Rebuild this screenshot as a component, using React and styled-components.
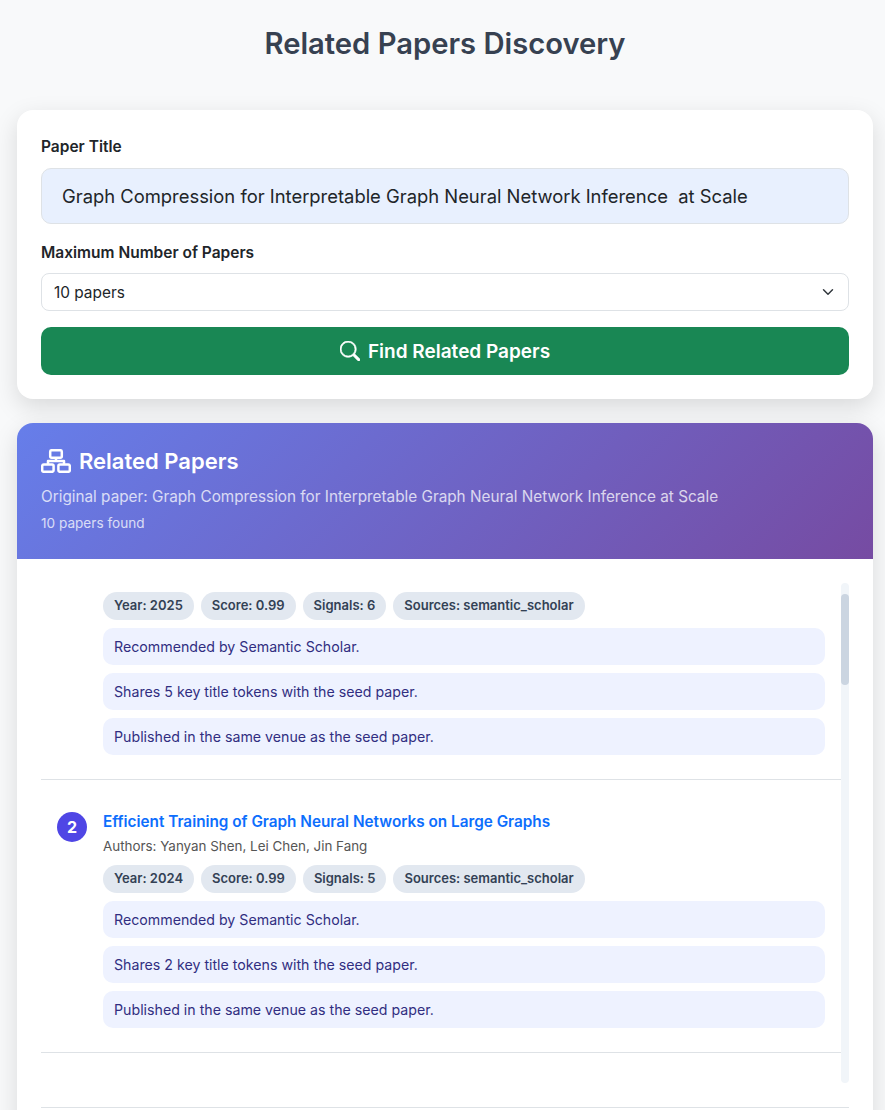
import React, { useLayoutEffect, useRef } from "react";
import styled, { createGlobalStyle } from "styled-components";
import { BsSearch } from "react-icons/bs";

const GlobalStyle = createGlobalStyle`
  html, body {
    margin: 0;
    padding: 0;
    background: #f8f9fa;
    font-family: Inter, "Liberation Sans", sans-serif;
  }
  * {
    box-sizing: border-box;
  }
`;

const Page = styled.div`
  height: 1110px;
  overflow: hidden;
  padding: 0 12px 0 17px;
`;

const PageTitle = styled.h1`
  margin: 0;
  padding-top: 24px;
  height: 110px;
  text-align: center;
  font-size: 29.2px;
  line-height: 40px;
  font-weight: 600;
  color: #374151;
`;

const SearchCard = styled.form`
  display: flex;
  flex-direction: column;
  padding: 24px;
  background: #fff;
  border-radius: 16px;
  box-shadow: 0 8px 24px rgba(0, 0, 0, 0.13);
`;

const Label = styled.label`
  padding-top: 1px;
  font-size: 15.5px;
  line-height: 24px;
  font-weight: 600;
  color: #212529;
  margin-bottom: ${({ $gap }) => $gap}px;
`;

const TitleInput = styled.input`
  height: 56px;
  padding: 0 20px;
  margin-bottom: 16px;
  background: #e8f0fe;
  border: 1px solid #dee2e6;
  border-radius: 10px;
  font: 400 18.4px Inter, sans-serif;
  color: #212529;
`;

const Select = styled.select`
  height: 38px;
  padding: 0 36px 0 12px;
  margin-bottom: 16px;
  appearance: none;
  background: #fff url("data:image/svg+xml,%3csvg xmlns='http://www.w3.org/2000/svg' viewBox='0 0 16 16'%3e%3cpath fill='none' stroke='%23343a40' stroke-linecap='round' stroke-linejoin='round' stroke-width='2' d='m2 5 6 6 6-6'/%3e%3c/svg%3e") no-repeat right 12px center / 16px 12px;
  border: 1px solid #dee2e6;
  border-radius: 8px;
  font: 400 15.4px Inter, sans-serif;
  color: #212529;
`;

const SubmitButton = styled.button`
  display: flex;
  align-items: center;
  justify-content: center;
  gap: 8px;
  height: 48px;
  background: #198754;
  border: 0;
  border-radius: 10px;
  color: #fff;
  font: 600 19px Inter, sans-serif;
`;

const ResultsCard = styled.section`
  margin-top: 24px;
  background: #fff;
  border-radius: 16px;
  box-shadow: 0 8px 24px rgba(0, 0, 0, 0.13);
`;

const ResultsHeader = styled.header`
  height: 136px;
  padding: 23px 24px 0;
  background: linear-gradient(135deg, #667eea 0%, #764ba2 100%);
  border-radius: 16px 16px 0 0;
  color: #fff;
`;

const ResultsTitle = styled.h2`
  display: flex;
  align-items: center;
  gap: 8px;
  height: 30px;
  margin: 0 0 9px;
  font-size: 22px;
  font-weight: 600;
`;

const OriginalPaper = styled.div`
  font-size: 15.3px;
  line-height: 24px;
  opacity: 0.75;
`;

const FoundCount = styled.div`
  margin-top: 4px;
  font-size: 13.6px;
  line-height: 21px;
  opacity: 0.75;
`;

const ResultsBody = styled.div`
  padding: 24px;
`;

const ScrollFrame = styled.div`
  position: relative;
  padding-right: 8px;
`;

const ScrollArea = styled.div`
  height: 500px;
  overflow: hidden;
`;

const ScrollTrack = styled.div`
  position: absolute;
  top: 0;
  right: 0;
  bottom: 0;
  width: 8px;
  background: #f1f5f9;
  border-radius: 4px;
`;

const ScrollThumb = styled.div`
  position: absolute;
  top: 11px;
  left: 0;
  width: 8px;
  height: 91px;
  background: #cbd5e1;
  border-radius: 4px;
`;

const ListEnd = styled.div`
  height: 60px;
`;

const Item = styled.article`
  display: flex;
  gap: 16px;
  padding: 30px 16px 24px;
  border-bottom: 1px solid #dee2e6;
`;

const Rank = styled.div`
  flex: none;
  display: flex;
  align-items: center;
  justify-content: center;
  width: 30px;
  height: 30px;
  margin-top: 2px;
  border-radius: 50%;
  background: #4f46e5;
  color: #fff;
  font-size: 16px;
  font-weight: 700;
`;

const ItemContent = styled.div`
  flex: 1;
  min-width: 0;
`;

const PaperTitle = styled.a`
  display: block;
  padding-top: 1px;
  font-size: 15.3px;
  line-height: 22px;
  font-weight: 600;
  color: #0d6efd;
`;

const Authors = styled.div`
  margin-top: 3px;
  font-size: 13.4px;
  line-height: 20px;
  color: #555;
`;

const Badges = styled.div`
  display: flex;
  gap: 7px;
  margin-top: 9px;
`;

const Badge = styled.span`
  padding: 0 11px;
  height: 27.5px;
  line-height: 27.5px;
  border-radius: 14px;
  background: #e2e8f0;
  color: #334155;
  font-size: 13px;
  font-weight: 600;
`;

const Reasons = styled.div`
  display: flex;
  flex-direction: column;
  gap: 8px;
  margin-top: 8.5px;
`;

const Reason = styled.div`
  height: 37px;
  padding: 0 11px;
  line-height: 37px;
  border-radius: 10px;
  background: #eef2ff;
  color: #312e81;
  font-size: 14.2px;
`;

const Divider = styled.hr`
  margin: 24px 0 0;
  border: 0;
  border-top: 1px solid #dee2e6;
`;

const NetworkIcon = () => (
  <svg width="30" height="24" viewBox="0 0 30 24" fill="none" stroke="currentColor" strokeWidth="2.5" strokeLinejoin="round" aria-hidden="true">
    <rect x="9.2" y="1.2" width="11.6" height="7.6" rx="1.5" />
    <path d="M15 8.8V12M7 15.6V12H23V15.6" />
    <rect x="1.2" y="15.6" width="11.4" height="7.2" rx="1.5" />
    <rect x="17.4" y="15.6" width="11.4" height="7.2" rx="1.5" />
  </svg>
);

const papers = [
  { title: "Graph Neural Network Inference at Scale", authors: "Authors: Unknown", year: 2025, signals: 6, tokens: 5 },
  { title: "Efficient Training of Graph Neural Networks on Large Graphs", authors: "Authors: Yanyan Shen, Lei Chen, Jin Fang", year: 2024, signals: 5, tokens: 2 },
];

const PaperItem = ({ paper, rank }) => (
  <Item>
    <Rank>{rank}</Rank>
    <ItemContent>
      <PaperTitle>{paper.title}</PaperTitle>
      <Authors>{paper.authors}</Authors>
      <Badges>
        <Badge>Year: {paper.year}</Badge>
        <Badge>Score: 0.99</Badge>
        <Badge>Signals: {paper.signals}</Badge>
        <Badge>Sources: semantic_scholar</Badge>
      </Badges>
      <Reasons>
        <Reason>Recommended by Semantic Scholar.</Reason>
        <Reason>Shares {paper.tokens} key title tokens with the seed paper.</Reason>
        <Reason>Published in the same venue as the seed paper.</Reason>
      </Reasons>
    </ItemContent>
  </Item>
);

const App = () => {
  const scrollRef = useRef(null);

  // the list is photographed a little way down
  useLayoutEffect(() => {
    scrollRef.current.scrollTop = 76;
  }, []);

  return (
    <Page>
      <GlobalStyle />
      <PageTitle>Related Papers Discovery</PageTitle>
      <SearchCard>
        <Label $gap={9}>Paper Title</Label>
        <TitleInput readOnly value="Graph Compression for Interpretable Graph Neural Network Inference  at Scale" />
        <Label $gap={8}>Maximum Number of Papers</Label>
        <Select defaultValue="10">
          <option value="10">10 papers</option>
        </Select>
        <SubmitButton type="button">
          <BsSearch size={20} stroke="currentColor" strokeWidth={0.5} />
          Find Related Papers
        </SubmitButton>
      </SearchCard>
      <ResultsCard>
        <ResultsHeader>
          <ResultsTitle>
            <NetworkIcon />
            Related Papers
          </ResultsTitle>
          <OriginalPaper>Original paper: Graph Compression for Interpretable Graph Neural Network Inference at Scale</OriginalPaper>
          <FoundCount>10 papers found</FoundCount>
        </ResultsHeader>
        <ResultsBody>
          <ScrollFrame>
            <ScrollArea ref={scrollRef}>
              {papers.map((paper, i) => (
                <PaperItem key={paper.title} paper={paper} rank={i + 1} />
              ))}
              <ListEnd />
            </ScrollArea>
            <ScrollTrack>
              <ScrollThumb />
            </ScrollTrack>
          </ScrollFrame>
          <Divider />
        </ResultsBody>
      </ResultsCard>
    </Page>
  );
};

export default App;
